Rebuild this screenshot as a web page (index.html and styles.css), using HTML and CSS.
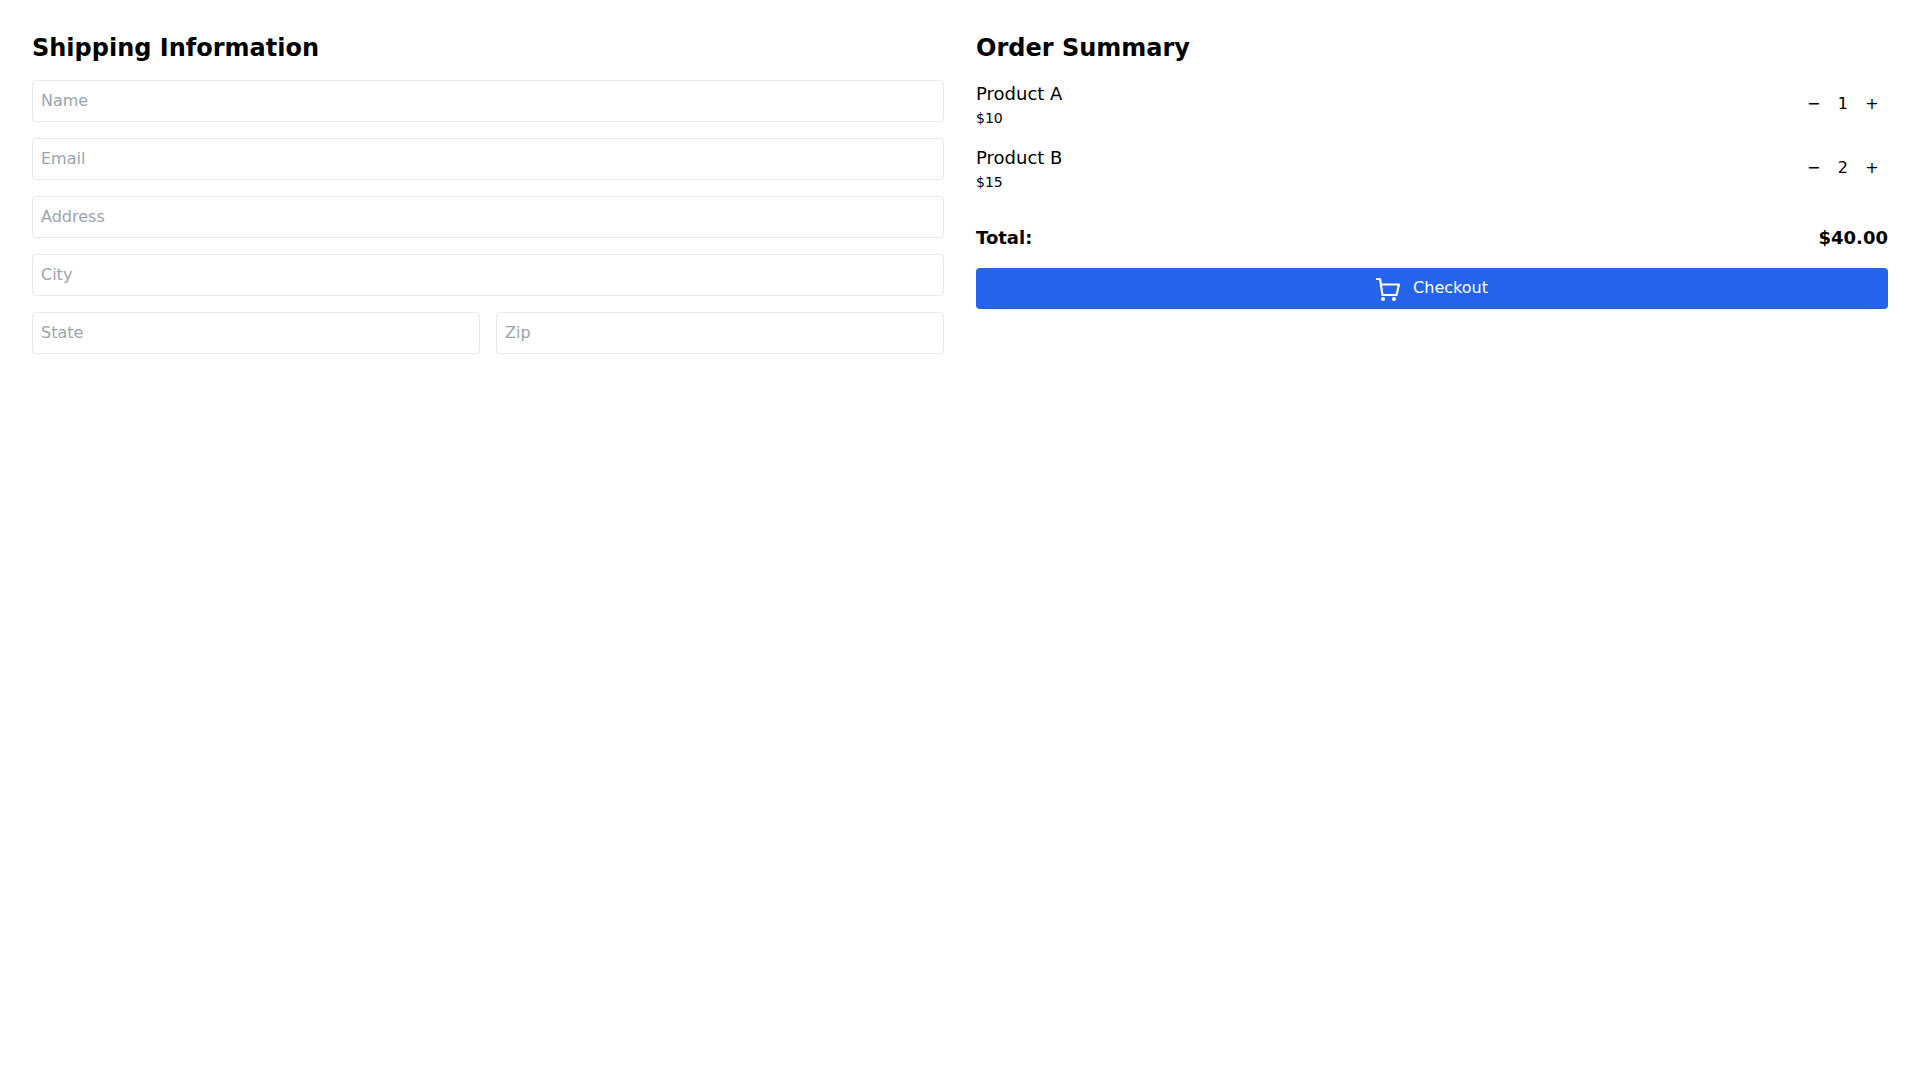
FILE: index.html
```html
<!DOCTYPE html>
<html lang="en">
<head>
    <meta charset="UTF-8">
    <meta name="viewport" content="width=device-width, initial-scale=1.0">
    <title>Checkout</title>
    <link rel="stylesheet" href="styles.css">
</head>
<body>
    <div class="container">
        <div class="column">
            <h2>Shipping Information</h2>
            <div class="form">
                <input type="text" placeholder="Name">
                <input type="email" placeholder="Email">
                <input type="text" placeholder="Address">
                <input type="text" placeholder="City">
                <div class="form-row">
                    <input type="text" placeholder="State">
                    <input type="text" placeholder="Zip">
                </div>
            </div>
        </div>
        <div class="column">
            <h2>Order Summary</h2>
            <div class="item">
                <div>
                    <p class="item-name">Product A</p>
                    <p class="item-price">$10</p>
                </div>
                <div class="qty">
                    <button>−</button>
                    <span>1</span>
                    <button>+</button>
                </div>
            </div>
            <div class="item">
                <div>
                    <p class="item-name">Product B</p>
                    <p class="item-price">$15</p>
                </div>
                <div class="qty">
                    <button>−</button>
                    <span>2</span>
                    <button>+</button>
                </div>
            </div>
            <div class="total">
                <span>Total:</span>
                <span>$40.00</span>
            </div>
            <button class="checkout">
                <svg class="cart-icon" viewBox="0 0 24 24" fill="none" stroke="currentColor" stroke-width="2.2" stroke-linecap="round" stroke-linejoin="round">
                    <path d="M1 2h3l2.5 16h14L23 7.5H4.8"/>
                    <circle cx="7" cy="22" r="2" fill="currentColor" stroke="none"/>
                    <circle cx="18" cy="22" r="2" fill="currentColor" stroke="none"/>
                </svg>
                <span>Checkout</span>
            </button>
        </div>
    </div>
</body>
</html>
```

FILE: styles.css
```css
*,
*::before,
*::after{
    padding: 0;
    margin: 0;
    box-sizing: border-box;
}
body{
    background-color: #ffffff;
    color: #000000;
    font-family: "DejaVu Sans", sans-serif;
}
.container{
    display: grid;
    grid-template-columns: 1fr 1fr;
    gap: 32px;
    padding: 32px;
}
h2{
    font-size: 24px;
    line-height: 32px;
    font-weight: 700;
    margin-bottom: 16px;
}
.form{
    display: flex;
    flex-direction: column;
    gap: 16px;
}
.form-row{
    display: grid;
    grid-template-columns: 1fr 1fr;
    gap: 16px;
}
input{
    width: 100%;
    height: 42px;
    padding: 7px 8px 9px;
    border: 1px solid #e5e7eb;
    border-radius: 4px;
    font-family: inherit;
    font-size: 16px;
    line-height: 24px;
    outline: none;
}
input::placeholder{
    color: #9ca3af;
}
.item{
    display: flex;
    justify-content: space-between;
    align-items: center;
    margin-bottom: 16px;
}
.item-name{
    font-size: 18px;
    line-height: 28px;
}
.item-price{
    font-size: 14px;
    line-height: 20px;
}
.qty{
    display: flex;
    align-items: center;
}
.qty span{
    font-size: 16px;
    line-height: 24px;
    padding: 0 8px;
}
.qty button{
    width: 32px;
    background: none;
    border: none;
    font-family: inherit;
    font-size: 16px;
    line-height: 24px;
    padding: 4px 8px;
    color: #000000;
}
.total{
    display: flex;
    justify-content: space-between;
    font-size: 18px;
    line-height: 28px;
    font-weight: 700;
    margin-top: 32px;
    margin-bottom: 16px;
}
.checkout{
    width: 100%;
    height: 41px;
    display: flex;
    align-items: center;
    justify-content: center;
    gap: 8px;
    background-color: #2563eb;
    color: #ffffff;
    border: none;
    border-radius: 4px;
    font-family: inherit;
    font-size: 16px;
    line-height: 24px;
}
.checkout span{
    margin-left: 5px;
    margin-bottom: 2px;
}
.cart-icon{
    width: 24px;
    height: 24px;
}
```
